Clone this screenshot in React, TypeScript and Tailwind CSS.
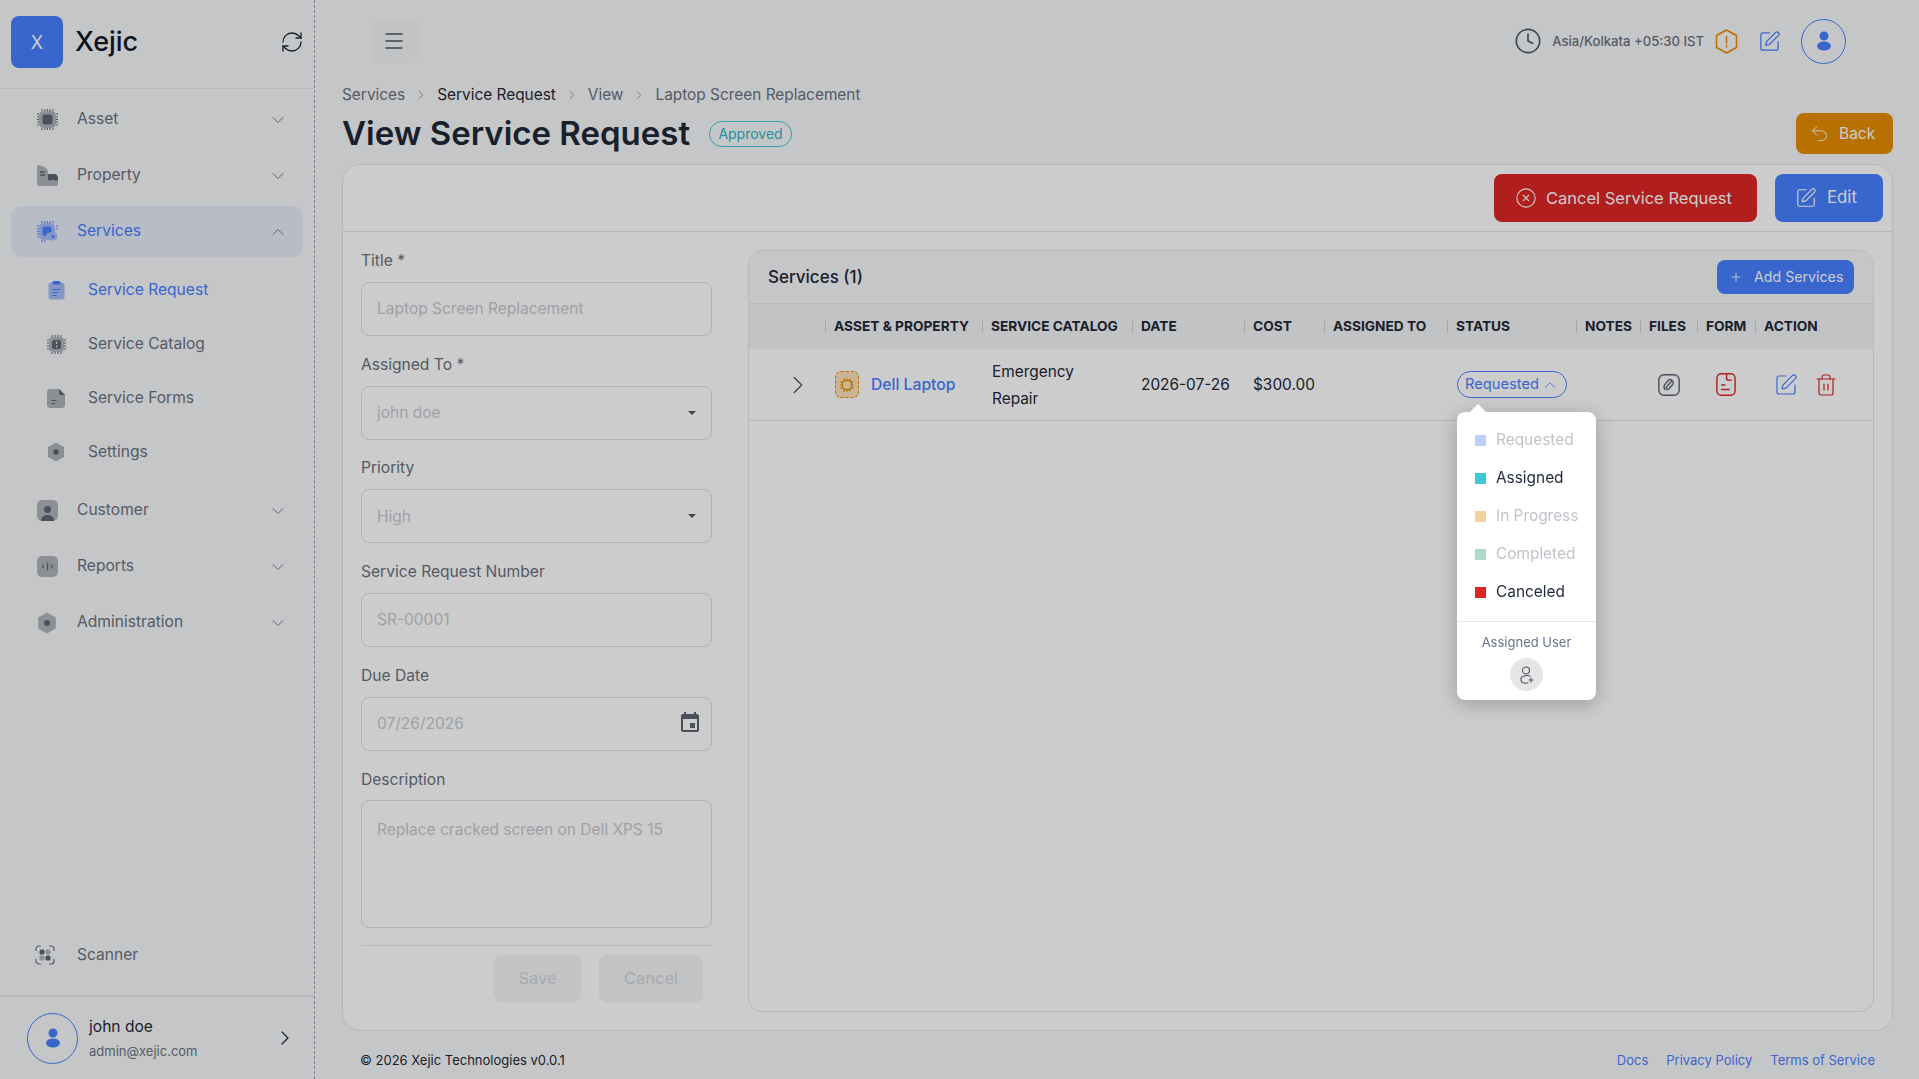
import { ReactNode } from "react";
import {
  ChevronDown,
  ChevronRight,
  ChevronUp,
  CircleX,
  Clock,
  Menu,
  Plus,
  RefreshCw,
  SquarePen,
  Trash2,
  Undo2,
} from "lucide-react";

const LIGHT = "#b0b4ba";
const DARK = "#5d6675";

function AssetIcon() {
  return (
    <svg width="21" height="21" viewBox="0 0 21 21" fill="none">
      <path d="M5 0v2M8 0v2M10.500 0v2M13 0v2M16 0v2M5 19v2M8 19v2M10.500 19v2M13 19v2M16 19v2M0 5h2M0 8h2M0 10.500h2M0 13h2M0 16h2M19 5h2M19 8h2M19 10.500h2M19 13h2M19 16h2" stroke={DARK} strokeWidth="1" />
      <rect x="2" y="2" width="17" height="17" rx="4.500" fill={LIGHT} />
      <rect x="5.500" y="5.500" width="10" height="10" rx="2.500" fill={DARK} />
    </svg>
  );
}

function PropertyIcon() {
  return (
    <svg width="21" height="21" viewBox="0 0 21 21" fill="none">
      <path d="M0 2Q0 0 2 0L5 1Q11 3 11 7V21H2Q0 21 0 19Z" fill={LIGHT} />
      <path d="M11 9h6Q21 9 21 14V19Q21 21 19 21H11Z" fill={LIGHT} />
      <path d="M11 9h6Q21 9 21 14V15Q18 16.500 16 14.500Q13 16.500 11 14.500Z" fill={DARK} />
      <path d="M3 7h5M3 10h5" stroke={DARK} strokeWidth="1.300" />
    </svg>
  );
}

function ServicesIcon() {
  return (
    <svg width="21" height="21" viewBox="0 0 21 21" fill="none">
      <path d="M5 0v2M8 0v2M10.500 0v2M13 0v2M16 0v2M5 19v2M8 19v2M0 5h2M0 8h2M0 10.500h2M0 13h2M0 16h2M19 5h2M19 8h2" stroke="#4880ff" strokeWidth="1" />
      <rect x="2" y="2" width="16" height="17" rx="5" fill="#a4bcf5" />
      <path d="M5.500 7.500a2 2 0 0 1 2-2h4a3 3 0 0 1 3 3v2.500l-4 1-2 3h-1a2 2 0 0 1-2-2z" fill="#4880ff" />
      <path d="M16 11l4 2.300v4.400L16 20l-4-2.300v-4.400z" fill="#a4bcf5" />
      <circle cx="16" cy="15.500" r="1.400" fill="#4880ff" />
    </svg>
  );
}

function ClipboardIcon() {
  return (
    <svg width="17" height="19" viewBox="0 0 17 19" fill="none">
      <rect x=".5" y="1.500" width="16" height="17" rx="3" fill="#a4bcf5" />
      <rect x="4.500" y="0" width="8" height="3.500" rx="1.500" fill="#4880ff" />
      <path d="M4.500 8.500h8M4.500 11.500h6M4.500 14.500h4" stroke="#4880ff" strokeWidth="1.200" />
    </svg>
  );
}

function CatalogIcon() {
  return (
    <svg width="19" height="19" viewBox="0 0 19 19" fill="none">
      <path d="M5 0v2M8 0v2M11 0v2M14 0v2M5 17v2M8 17v2M11 17v2M14 17v2M0 5h2M0 8h2M0 11h2M0 14h2M17 5h2M17 8h2M17 11h2M17 14h2" stroke={DARK} strokeWidth="1" />
      <rect x="2" y="2" width="15" height="15" rx="4" fill={LIGHT} />
      <rect x="5" y="5" width="9" height="9" rx="2.500" fill={DARK} />
      <path d="M9.500 6.500v2.500M9.500 10.500v2" stroke="#e5e7eb" strokeWidth="1.200" />
    </svg>
  );
}

function FormsIcon() {
  return (
    <svg width="18" height="19" viewBox="0 0 18 19" fill="none">
      <path d="M3 0h9l6 6v10a3 3 0 0 1-3 3H3a3 3 0 0 1-3-3V3a3 3 0 0 1 3-3z" fill={LIGHT} />
      <path d="M12 0l6 6h-3.500A2.500 2.500 0 0 1 12 3.500z" fill={DARK} />
      <path d="M4.500 11.500h5M4.500 14.500h3.500" stroke={DARK} strokeWidth="1.200" />
    </svg>
  );
}

function HexDotIcon({ size }: { size: number }) {
  return (
    <svg width={size} height={size} viewBox="0 0 20 20" fill="none">
      <path d="M10 .5l8 4.500v10l-8 4.500-8-4.500V5z" fill={LIGHT} />
      <circle cx="10" cy="10" r="2.700" fill={DARK} />
    </svg>
  );
}

function CustomerIcon() {
  return (
    <svg width="21" height="21" viewBox="0 0 21 21" fill="none">
      <rect width="21" height="21" rx="5" fill={LIGHT} />
      <circle cx="10.500" cy="9.500" r="3.500" fill={DARK} />
      <path d="M4 21c0-4 3-6 6.500-6s6.500 2 6.500 6z" fill={DARK} />
    </svg>
  );
}

function ReportsIcon() {
  return (
    <svg width="21" height="21" viewBox="0 0 21 21" fill="none">
      <rect width="21" height="21" rx="5" fill={LIGHT} />
      <path d="M6 8.500v4M10.500 6.500v8M15 8.500v4" stroke={DARK} strokeWidth="1.300" />
    </svg>
  );
}

function ScannerIcon() {
  return (
    <svg width="20" height="20" viewBox="0 0 20 20" fill="none">
      <path d="M1 6V4a3 3 0 0 1 3-3h2M14 1h2a3 3 0 0 1 3 3v2M19 14v2a3 3 0 0 1-3 3h-2M6 19H4a3 3 0 0 1-3-3v-2" stroke="#6b7280" strokeWidth="1.200" />
      <rect x="4.500" y="4.500" width="5" height="5" rx="1.500" fill={DARK} />
      <rect x="10.500" y="4.500" width="5" height="5" rx="1.500" fill={LIGHT} />
      <rect x="4.500" y="10.500" width="5" height="5" rx="1.500" fill={LIGHT} />
      <rect x="10.500" y="10.500" width="5" height="5" rx="1.500" fill={DARK} />
    </svg>
  );
}

function UserGlyph() {
  return (
    <svg width="16" height="20" viewBox="0 0 16 20" fill="#4880ff">
      <circle cx="8" cy="5" r="4.500" />
      <ellipse cx="8" cy="15" rx="7" ry="4.500" />
    </svg>
  );
}

function WarnHexIcon() {
  return (
    <svg width="23" height="25" viewBox="0 0 23 25" fill="none" stroke="#e78c00" strokeWidth="1.500" strokeLinejoin="round">
      <path d="M11.500 1l10 5.500v12l-10 5.500-10-5.500v-12z" />
      <path d="M11.500 7.500v6.500M11.500 16.500v1.500" strokeLinecap="round" />
    </svg>
  );
}

function FileClipIcon() {
  return (
    <svg width="22" height="22" viewBox="0 0 19 19" fill="none" stroke={DARK} strokeWidth="1.200">
      <rect x=".7" y=".7" width="17.600" height="17.600" rx="4.500" />
      <path d="M11.500 6.500l-4 4.500a1.300 1.300 0 0 0 2 1.800l3-3.500a2.600 2.600 0 0 0-4-3.500l-2.800 3.500a3.600 3.600 0 0 0 .5 4.200" strokeLinecap="round" />
    </svg>
  );
}

function FormFileIcon() {
  return (
    <svg width="20" height="23" viewBox="0 0 18 21" fill="none" stroke="#dc2626" strokeWidth="1.300" strokeLinecap="round">
      <rect x=".7" y=".7" width="16.600" height="19.600" rx="4" />
      <path d="M9.500 1v3.500a2 2 0 0 0 2 2H14M5 11h3M5 15h7" />
    </svg>
  );
}

function ChipBadge() {
  return (
    <span className="flex h-[27px] w-[24px] items-center justify-center rounded-[6px] border border-dashed border-[#e78c00] bg-[#fde2bd]">
      <svg width="14" height="14" viewBox="0 0 14 14" fill="none" stroke="#e78c00">
        <rect x="2.500" y="2.500" width="9" height="9" rx="2.500" strokeWidth="1.300" />
        <path d="M4 0v2M7 0v2M10 0v2M4 12v2M7 12v2M10 12v2M0 4h2M0 7h2M0 10h2M12 4h2M12 7h2M12 10h2" strokeWidth=".9" />
      </svg>
    </span>
  );
}

function NavItem({ icon, label, open, active }: { icon: ReactNode; label: string; open?: boolean; active?: boolean }) {
  return (
    <div
      className={`mx-[11px] flex h-[51px] items-center rounded-[10px] pl-[25px] pr-[15px] ${active ? "bg-[#e5ebf8] text-[#4880ff]" : "text-[#6b7280]"}`}
    >
      <span className="flex w-[22px] justify-center">{icon}</span>
      <span className="ml-[19px] flex-1 pb-[1px] text-[15.600px]">{label}</span>
      {open ? (
        <ChevronUp size={20} strokeWidth={0.9} className="text-[#4b5563]" />
      ) : (
        <ChevronDown size={20} strokeWidth={0.9} className="text-[#4b5563]" />
      )}
    </div>
  );
}

function SubItem({ icon, label, active }: { icon: ReactNode; label: string; active?: boolean }) {
  return (
    <div className={`flex h-[54px] items-center pl-[46px] ${active ? "text-[#4880ff]" : "text-[#6b7280]"}`}>
      <span className="flex w-[20px] justify-center">{icon}</span>
      <span className="ml-[22px] text-[15.600px]">{label}</span>
    </div>
  );
}

function Sidebar() {
  return (
    <aside className="flex h-full w-[315px] shrink-0 flex-col border-r border-dashed border-[#9ca3af] bg-[#f7f8fa]">
      <div className="flex h-[89px] shrink-0 items-center border-b border-[#e5e7eb] pb-[4px] pl-[11px] pr-[10px]">
        <div className="flex h-[52px] w-[52px] items-center justify-center rounded-[8px] bg-[#4880ff] text-[18px] text-white">X</div>
        <span className="ml-[12px] flex-1 text-[27px] font-medium text-[#111827]">Xejic</span>
        <RefreshCw size={24} strokeWidth={1.300} className="text-[#1f2937]" />
      </div>
      <nav className="flex flex-1 flex-col gap-[5px] pt-[5px]">
        <NavItem icon={<AssetIcon />} label="Asset" />
        <NavItem icon={<PropertyIcon />} label="Property" />
        <NavItem icon={<ServicesIcon />} label="Services" open active />
        <div className="py-[1px]">
          <SubItem icon={<ClipboardIcon />} label="Service Request" active />
          <SubItem icon={<CatalogIcon />} label="Service Catalog" />
          <SubItem icon={<FormsIcon />} label="Service Forms" />
          <SubItem icon={<HexDotIcon size={20} />} label="Settings" />
        </div>
        <NavItem icon={<CustomerIcon />} label="Customer" />
        <NavItem icon={<ReportsIcon />} label="Reports" />
        <NavItem icon={<HexDotIcon size={22} />} label="Administration" />
      </nav>
      <div className="flex h-[41px] shrink-0 items-center pl-[35px] text-[15.600px] text-[#6b7280]">
        <ScannerIcon />
        <span className="ml-[22px]">Scanner</span>
      </div>
      <div className="mt-[20px] flex h-[84px] shrink-0 items-center border-t-2 border-[#e5e7eb] pl-[27px] pr-[17px]">
        <div className="flex h-[51px] w-[51px] shrink-0 items-center justify-center rounded-full border border-[#4880ff]">
          <UserGlyph />
        </div>
        <div className="ml-[11px] flex-1 pt-[1px]">
          <p className="text-[15.600px] leading-[24px] text-[#1f2937]">john doe</p>
          <p className="text-[13px] leading-[24px] text-[#6b7280]">admin@xejic.com</p>
        </div>
        <ChevronRight size={24} strokeWidth={1.200} className="text-[#1f2937]" />
      </div>
    </aside>
  );
}

function TopBar() {
  return (
    <header className="flex h-[82px] shrink-0 items-center pl-[55px] pr-[73px]">
      <div className="flex h-[44px] w-[48px] items-center justify-center rounded-[8px] bg-[#f3f4f6]">
        <Menu size={24} strokeWidth={1.500} className="text-[#4b5563]" />
      </div>
      <div className="flex-1" />
      <Clock size={28} strokeWidth={1.400} className="text-[#4b5563]" />
      <span className="ml-[10px] pt-[1px] text-[13.100px] font-medium text-[#6b7280]">Asia/Kolkata +05:30 IST</span>
      <span className="ml-[11px] flex">
        <WarnHexIcon />
      </span>
      <SquarePen size={23} strokeWidth={1.300} className="ml-[20px] text-[#4880ff]" />
      <div className="ml-[20px] flex h-[45px] w-[45px] items-center justify-center rounded-full border border-[#4880ff]">
        <UserGlyph />
      </div>
    </header>
  );
}

function Crumb({ label, dark, last }: { label: string; dark?: boolean; last?: boolean }) {
  return (
    <>
      <span className={dark ? "text-[#1f2937]" : "text-[#6b7280]"}>{label}</span>
      {!last && <ChevronRight size={14} strokeWidth={1.100} className="mx-[9px] text-[#6b7280]" />}
    </>
  );
}

function Field({ label, required, children, gap = "mb-[11px]" }: { label: string; required?: boolean; children: ReactNode; gap?: string }) {
  return (
    <div>
      <p className={`h-[22px] text-[15.600px] leading-[24px] text-[#6b7280] ${gap}`}>
        {label}
        {required && <span> *</span>}
      </p>
      {children}
    </div>
  );
}

function TextBox({ value, caret, calendar }: { value: string; caret?: boolean; calendar?: boolean }) {
  return (
    <div className="flex h-[54px] items-center rounded-[8px] border border-[#dde0e4] pl-[15px] pr-[9px] text-[15.500px] text-[#c7cad0]">
      <span className="flex-1">{value}</span>
      {caret && <span className="mr-[6px] h-0 w-0 border-x-[4.500px] border-t-[4.500px] border-x-transparent border-t-[#4b5563]" />}
      {calendar && (
        <svg width="24" height="24" viewBox="0 0 24 24" fill="#5d6675" className="-mt-[1px]">
          <path d="M17 12h-5v5h5v-5zM16 1v2H8V1H6v2H5c-1.110 0-1.990.9-1.990 2L3 19c0 1.100.89 2 2 2h14c1.100 0 2-.9 2-2V5c0-1.100-.9-2-2-2h-1V1h-2zm3 18H5V8h14v11z" />
        </svg>
      )}
    </div>
  );
}

function FormColumn() {
  return (
    <div className="ml-[18px] flex w-[351px] shrink-0 flex-col gap-[16.700px] pt-[17px]">
      <Field label="Title" required>
        <TextBox value="Laptop Screen Replacement" />
      </Field>
      <Field label="Assigned To" required>
        <TextBox value="john doe" caret />
      </Field>
      <Field label="Priority">
        <TextBox value="High" caret />
      </Field>
      <Field label="Service Request Number">
        <TextBox value="SR-00001" />
      </Field>
      <Field label="Due Date">
        <TextBox value="07/26/2026" calendar />
      </Field>
      <div className="pt-[1px]">
        <Field label="Description" gap="mb-[10px]">
          <div className="h-[128px] rounded-[8px] border border-[#dde0e4] px-[15px] py-[18px] text-[15.500px] leading-[22px] text-[#c7cad0]">
            Replace cracked screen on Dell XPS 15
          </div>
        </Field>
      </div>
      <div className="flex justify-end gap-[18px] border-t border-[#e5e7eb] pr-[9px] pt-[9px]">
        <button className="h-[47px] w-[87px] rounded-[8px] bg-[#f3f4f6] text-[16.500px] text-[#d1d5db]">Save</button>
        <button className="h-[47px] w-[104px] rounded-[8px] bg-[#f3f4f6] text-[16.500px] text-[#d1d5db]">Cancel</button>
      </div>
    </div>
  );
}

const columns = "grid grid-cols-[76px_157px_150px_112px_80px_123px_129px_64px_57px_58px_1fr]";
const headers = ["Asset & Property", "Service Catalog", "Date", "Cost", "Assigned To", "Status", "Notes", "Files", "Form", "Action"];

const statuses = [
  { label: "Requested", swatch: "bg-[#bccffb]", text: "text-[#c0c4ca]" },
  { label: "Assigned", swatch: "bg-[#3cc8d7]", text: "text-[#1f2937]" },
  { label: "In Progress", swatch: "bg-[#f5d09c]", text: "text-[#c0c4ca]" },
  { label: "Completed", swatch: "bg-[#abdcc8]", text: "text-[#c0c4ca]" },
  { label: "Canceled", swatch: "bg-[#dc2626]", text: "text-[#1f2937]" },
];

function StatusMenu() {
  return (
    <div className="absolute left-[10px] top-[63px] z-50 w-[139px] rounded-[8px] bg-white shadow-[0_4px_20px_rgba(0,0,0,0.25)]">
      <span className="absolute -top-[8px] left-[13px] h-0 w-0 border-x-[8px] border-b-[8px] border-x-transparent border-b-white" />
      <div className="pb-[10px] pt-[9px]">
        {statuses.map((s) => (
          <div key={s.label} className="flex h-[38px] items-center pl-[18px]">
            <span className={`h-[11px] w-[11px] ${s.swatch}`} />
            <span className={`ml-[10px] text-[15.400px] ${s.text}`}>{s.label}</span>
          </div>
        ))}
      </div>
      <div className="flex flex-col items-center border-t border-[#e5e7eb] pb-[9px] pt-[10px]">
        <p className="text-[13px] leading-[20px] text-[#64748b]">Assigned User</p>
        <div className="mt-[6px] flex h-[33px] w-[33px] items-center justify-center rounded-full bg-[#e5e5e5]">
          <svg width="14" height="18" viewBox="0 0 14 18" fill="none" stroke="#4b5563" strokeWidth="1.100" strokeLinecap="round">
            <circle cx="6" cy="4.500" r="3.500" />
            <path d="M8 17H5a3.500 3.500 0 0 1-1-7c2-.7 4-.7 6 0M11 12v4M9 14h4" />
          </svg>
        </div>
      </div>
    </div>
  );
}

function ServicesPanel() {
  return (
    <div className="ml-[36px] mr-[18px] my-[18px] flex min-w-0 flex-1 flex-col rounded-[14px] border border-[#e5e7eb]">
      <div className="flex h-[53px] shrink-0 items-center justify-between rounded-t-[14px] border-b border-[#e5e7eb] bg-[#f7f8fa] pl-[19px] pr-[19px]">
        <span className="pt-[2px] text-[17px] font-medium text-[#1f2937]">Services (1)</span>
        <button className="flex h-[34px] w-[137px] items-center rounded-[8px] bg-[#4880ff] pl-[12px] text-[14.200px] text-white">
          <Plus size={14} strokeWidth={1.500} />
          <span className="ml-[11px]">Add Services</span>
        </button>
      </div>
      <div className={`${columns} h-[45px] shrink-0 items-center bg-[#f3f4f6]`}>
        <span />
        {headers.map((h) => (
          <div key={h} className="flex items-center whitespace-nowrap text-[13.700px] font-bold uppercase text-[#1f2937]">
            <span className="mr-[8px] h-[13px] w-px bg-[#d1d5db]" />
            {h}
          </div>
        ))}
      </div>
      <div className={`${columns} h-[72px] shrink-0 items-center border-b border-[#e5e7eb] text-[15.400px] text-[#1f2937]`}>
        <div className="flex justify-center pl-[21px]">
          <ChevronRight size={30} strokeWidth={1} className="text-[#4b5563]" />
        </div>
        <div className="flex items-center pl-[10px]">
          <ChipBadge />
          <span className="ml-[12px] whitespace-nowrap text-[15.700px] font-medium text-[#4880ff]">Dell Laptop</span>
        </div>
        <div className="pl-[10px] leading-[27px]">
          Emergency
          <br />
          Repair
        </div>
        <div className="pl-[9px]">2026-07-26</div>
        <div className="pl-[9px]">$300.00</div>
        <div />
        <div className="relative flex h-full items-center pl-[10px]">
          <span className="flex h-[27px] w-[110px] items-center justify-center rounded-full border border-[#4880ff] text-[14.700px] text-[#4880ff]">
            Requested
            <ChevronUp size={18} strokeWidth={1.100} className="ml-[2px]" />
          </span>
          <StatusMenu />
        </div>
        <div />
        <div className="flex justify-center">
          <FileClipIcon />
        </div>
        <div className="flex justify-center">
          <FormFileIcon />
        </div>
        <div className="flex items-center pl-[19px]">
          <SquarePen size={24} strokeWidth={1.200} className="text-[#4880ff]" />
          <Trash2 size={24} strokeWidth={1.200} className="ml-[16px] text-[#dc2626]" />
        </div>
      </div>
    </div>
  );
}

export default function App() {
  return (
    <div className="flex h-screen w-full overflow-hidden bg-[#f7f8fa] font-['Inter',sans-serif]">
      <Sidebar />
      <main className="flex min-w-0 flex-1 flex-col">
        <TopBar />
        <div className="flex min-h-0 flex-1 flex-col pl-[27px] pr-[26px]">
          <div className="-mt-[1px] flex h-[28px] shrink-0 items-center text-[15.400px]">
            <Crumb label="Services" />
            <Crumb label="Service Request" dark />
            <Crumb label="View" />
            <Crumb label="Laptop Screen Replacement" last />
          </div>
          <div className="flex h-[50px] shrink-0 items-center">
            <h1 className="text-[33px] font-semibold text-[#1f2937]">View Service Request</h1>
            <span className="ml-[19px] -mt-[1px] flex h-[26px] w-[83px] items-center justify-center rounded-full border border-[#3cc8d7] text-[14px] text-[#2eb4c4]">Approved</span>
            <div className="flex-1" />
            <button className="-mt-[1px] flex h-[41px] w-[97px] items-center rounded-[8px] bg-[#e78c00] pl-[13px] text-[15.500px] text-white">
              <Undo2 size={21} strokeWidth={1.100} />
              <span className="ml-[9px]">Back</span>
            </button>
          </div>
          <section className="mt-[5px] flex h-[867px] shrink-0 flex-col rounded-[18px] border border-[#e5e7eb] bg-white">
            <div className="flex h-[67px] shrink-0 items-center justify-end gap-[18px] border-b border-[#e5e7eb] pr-[9px]">
              <button className="flex h-[48px] w-[263px] items-center rounded-[8px] bg-[#dc2626] pl-[21px] text-[16.500px] text-white">
                <CircleX size={22} strokeWidth={1.200} />
                <span className="ml-[9px]">Cancel Service Request</span>
              </button>
              <button className="flex h-[48px] w-[108px] items-center rounded-[8px] bg-[#4880ff] pl-[20px] text-[16.800px] text-white">
                <SquarePen size={22} strokeWidth={1.300} />
                <span className="ml-[10px]">Edit</span>
              </button>
            </div>
            <div className="flex min-h-0 flex-1">
              <FormColumn />
              <ServicesPanel />
            </div>
          </section>
          <footer className="flex flex-1 items-center justify-between pl-[18px] pr-[18px] pt-[11px] text-[13px]">
            <span className="text-[#1f2937]">© 2026 Xejic Technologies v0.0.1</span>
            <div className="flex gap-[18px] text-[#4880ff]">
              <span>Docs</span>
              <span>Privacy Policy</span>
              <span>Terms of Service</span>
            </div>
          </footer>
        </div>
      </main>
      <div className="fixed inset-0 z-40 bg-black/20" />
    </div>
  );
}
